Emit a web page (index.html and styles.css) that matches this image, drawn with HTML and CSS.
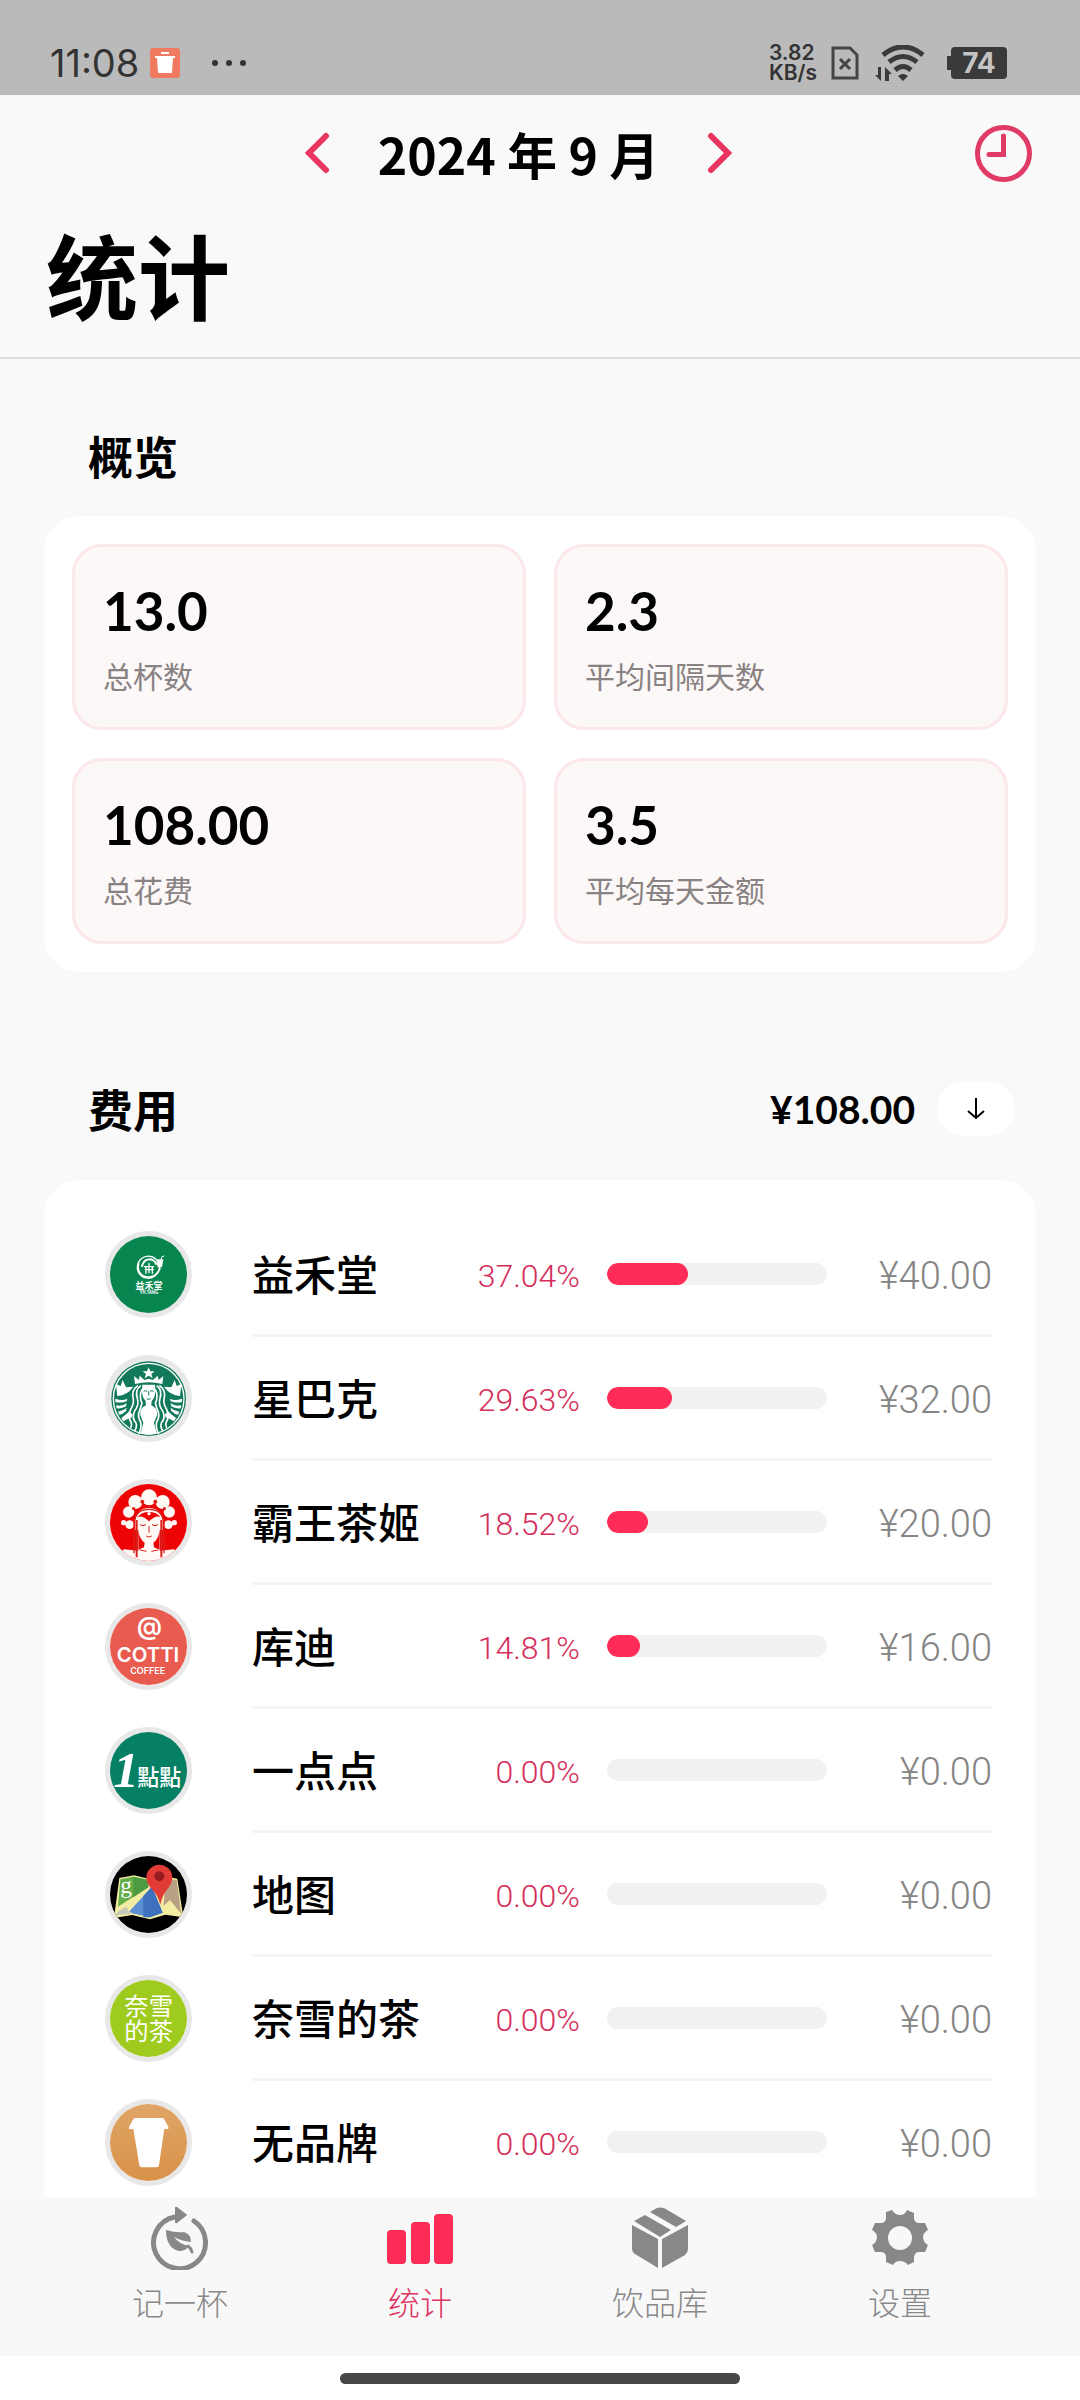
FILE: index.html
```
<!DOCTYPE html>
<html lang="zh-CN">
<head>
    <meta charset="UTF-8">
    <meta name="viewport" content="width=device-width, initial-scale=1.0">
    <title>统计</title>
    <link rel="stylesheet" href="styles.css">
</head>
<body>
    <div class="status-bar">
        <div class="status-left">
            <span class="status-time">11:08</span>
            <svg class="status-app" viewBox="0 0 30 30">
                <rect width="30" height="30" rx="3" fill="#f07a60"/>
                <path d="M11 4h8v2h-8zM5 8h20v2h-2l-1 14q0 1-1 1H9q-1 0-1-1L7 10H5z" fill="#fff"/>
            </svg>
            <svg class="status-dots" viewBox="0 0 36 8" fill="#333">
                <circle cx="4" cy="4" r="3"/><circle cx="18" cy="4" r="3"/><circle cx="32" cy="4" r="3"/>
            </svg>
        </div>
        <div class="status-right">
            <div class="net-speed">3.82<br>KB/s</div>
            <svg class="icon-sim" viewBox="0 0 28 34" fill="none" stroke="#444" stroke-width="3">
                <path d="M2 2H19L26 9V32H2z"/><path d="M9 13l10 10M19 13L9 23"/>
            </svg>
            <svg class="icon-wifi" viewBox="0 0 50 36">
                <g fill="none" stroke="#3a3a3a" stroke-width="5">
                    <path d="M8 10Q28-6 48 10"/><path d="M14 17Q28 6 42 17"/><path d="M20 25Q28 18 36 25"/>
                </g>
                <path d="M23 31Q28 27 33 31L28 36zM3 22h3v14L0 30h3zM10 36V22l7 7h-3v7z" fill="#3a3a3a"/>
            </svg>
            <div class="battery">74</div>
        </div>
    </div>

    <header class="header">
        <div class="header-top">
            <div class="month-picker">
                <button class="icon-btn" type="button" aria-label="上个月">
                    <svg class="chevron" viewBox="0 0 26 42"><path d="M22 4L5 21L22 38"/></svg>
                </button>
                <span class="month">2024 年 9 月</span>
                <button class="icon-btn" type="button" aria-label="下个月">
                    <svg class="chevron" viewBox="0 0 26 42"><path d="M4 4L21 21L4 38"/></svg>
                </button>
            </div>
            <button class="icon-btn" type="button" aria-label="历史记录">
                <svg class="clock" viewBox="0 0 57 57"><circle cx="28.500" cy="28.500" r="26"/><path d="M28.500 11V29.500H14"/></svg>
            </button>
        </div>
        <h1 class="page-title">统计</h1>
    </header>

    <main class="main-content">
        <section class="section">
            <div class="section-head">
                <h2 class="section-title">概览</h2>
            </div>
            <div class="card stats">
                <div class="stat"><div class="stat-value">13.0</div><div class="stat-label">总杯数</div></div>
                <div class="stat"><div class="stat-value">2.3</div><div class="stat-label">平均间隔天数</div></div>
                <div class="stat"><div class="stat-value">108.00</div><div class="stat-label">总花费</div></div>
                <div class="stat"><div class="stat-value">3.5</div><div class="stat-label">平均每天金额</div></div>
            </div>
        </section>

        <section class="section section-cost">
            <div class="section-head">
                <h2 class="section-title">费用</h2>
                <span class="total">¥108.00</span>
                <button class="sort-btn" type="button" aria-label="排序">
                    <svg viewBox="0 0 20 24"><path d="M10 1V21M2 14L10 21L18 14"/></svg>
                </button>
            </div>
            <ul class="card brands">
                <li class="brand">
                    <svg class="logo" viewBox="0 0 231 231">
                        <rect width="231" height="231" fill="#07854f"/>
                        <g fill="none" stroke="#fff" stroke-linecap="round">
                            <path d="M138 70A33 33 0 1 0 148 93" stroke-width="4"/>
                            <path d="M86 82q-6 28 14 38q34 12 50-22" stroke-width="5"/>
                            <path d="M152 74l4-12l6-2" stroke-width="3"/>
                            <path d="M103 92h28M106 101h24M108 92v20M127 92v20M117 82v28" stroke-width="4"/>
                            <path d="M96 90q6-20 24-20q14 2 18 14" stroke-width="6"/>
                        </g>
                        <path d="M138 70h22l-4 24h-13z" fill="#fff"/>
                        <text class="logo-text" font-weight="700"><tspan x="117" y="159" font-size="27">益禾堂</tspan><tspan x="117" y="174" font-size="13">YH.TANG</tspan></text>
                    </svg>
                    <div class="brand-body">
                        <span class="name">益禾堂</span><span class="percent">37.04%</span>
                        <div class="bar"><div class="bar-fill" style="width: 37.04%"></div></div>
                        <span class="amount">¥40.00</span>
                    </div>
                </li>
                <li class="brand">
                    <svg class="logo" viewBox="0 0 231 231">
                        <rect width="231" height="231" fill="#e8e8e8"/>
                        <circle cx="116" cy="116" r="112" fill="#127a5b"/>
                        <circle cx="116" cy="116" r="106" fill="none" stroke="#fff" stroke-width="4"/>
                        <path d="M18 72l4 36q30-2 48-28l-22 2l-10-22l-6 18zM16 116q22 8 36 0l-2 8q-16 6-34 2zM18 136q20 4 32-6l-2 9q-12 8-28 6zM24 155q16-2 26-12l-2 10q-10 10-20 11zM34 174q12-8 24-20l10 10q-2 12-14 12l-14 8z" fill="#fff"/>
                        <path d="M214 72l-4 36q-30-2-48-28l22 2l10-22l6 18zM216 116q-22 8-36 0l2 8q16 6 34 2zM214 136q-20 4-32-6l2 9q12 8 28 6zM208 155q-16-2-26-12l2 10q10 10 20 11zM198 174q-12-8-24-20l-10 10q2 12 14 12l14 8z" fill="#fff"/>
                        <path d="M116 22l5 12h13l-10 8l4 13l-12-8l-12 8l4-13l-10-8h13zM72 48l14 12l3-13l14 13l13-4l13 4l14-13l3 13l14-12l-3 24q-41-10-82 0z" fill="#fff"/>
                        <path d="M97 74h38q5 34-10 50l-1 12q20 8 17 30l-9 22l8 32q-24 8-48 0l8-32l-9-22q-3-22 17-30l-1-12q-15-16-10-50z" fill="#fff"/>
                        <g fill="none" stroke="#fff" stroke-width="5">
                            <path d="M92 77q-18 14-10 38q6 20-8 38q-10 20 4 36q4 10-4 24"/>
                            <path d="M84 76q-22 16-14 42q2 14-8 30q-10 22 2 40q2 8-2 16"/>
                            <path d="M96 88q-10 20 0 42q-6 20-10 30q-2 14 6 26q4 18-6 36"/>
                            <path d="M140 77q18 14 10 38q-6 20 8 38q10 20-4 36q-4 10 4 24"/>
                            <path d="M148 76q22 16 14 42q-2 14 8 30q10 22-2 40q-2 8 2 16"/>
                            <path d="M136 88q10 20 0 42q6 20 10 30q2 14-6 26q-4 18 6 36"/>
                        </g>
                        <path d="M101 94q6-4 11 0M120 94q6-4 11 0M116 94v12M110 116q6 4 12 0" fill="none" stroke="#127a5b" stroke-width="3"/>
                    </svg>
                    <div class="brand-body">
                        <span class="name">星巴克</span><span class="percent">29.63%</span>
                        <div class="bar"><div class="bar-fill" style="width: 29.63%"></div></div>
                        <span class="amount">¥32.00</span>
                    </div>
                </li>
                <li class="brand">
                    <svg class="logo" viewBox="0 0 231 231">
                        <rect width="231" height="231" fill="#ee0304"/>
                        <g fill="#fffaf5">
                            <circle cx="117" cy="40" r="24"/><circle cx="76" cy="54" r="21"/><circle cx="158" cy="54" r="21"/>
                            <circle cx="56" cy="84" r="17"/><circle cx="178" cy="84" r="17"/><circle cx="59" cy="122" r="13"/>
                            <circle cx="175" cy="122" r="13"/><circle cx="41" cy="116" r="8"/><circle cx="193" cy="116" r="8"/>
                            <path d="M76 138V110Q82 72 117 72Q152 72 158 110V138z"/>
                            <path d="M85 200V104Q117 76 149 104V200L192 196L231 231H0L42 196z"/>
                        </g>
                        <path d="M82 100Q94 84 117 84Q140 84 152 100Q138 92 117 112Q96 92 82 100z" fill="#ee0304"/>
                        <path d="M85 142Q90 168 104 176L102 190L86 197zM149 142Q144 168 130 176L132 190L148 197z" fill="#ee0304"/>
                        <g fill="none" stroke="#d9211d" stroke-width="4">
                            <path d="M72 208V112Q80 76 117 76Q154 76 162 112V208"/>
                            <path d="M80 220V108M154 220V108" stroke-width="6"/>
                            <path d="M90 122q9 6 18 0M126 122q9 6 18 0M117 126v20M109 156q8 6 16 0M90 198l20 4M144 198l-20 4" stroke-width="3"/>
                        </g>
                        <g fill="#d9211d"><circle cx="97" cy="53" r="6"/><circle cx="136" cy="53" r="6"/><circle cx="71" cy="74" r="5"/><circle cx="163" cy="74" r="5"/><circle cx="117" cy="68" r="4"/></g>
                        <circle cx="117" cy="89" r="5" fill="#fff"/>
                    </svg>
                    <div class="brand-body">
                        <span class="name">霸王茶姬</span><span class="percent">18.52%</span>
                        <div class="bar"><div class="bar-fill" style="width: 18.52%"></div></div>
                        <span class="amount">¥20.00</span>
                    </div>
                </li>
                <li class="brand">
                    <svg class="logo" viewBox="0 0 231 231">
                        <rect width="231" height="231" fill="#e85b4e"/>
                        <text x="118" y="82" class="logo-text logo-latin" font-size="76" font-weight="600">@</text>
                        <text x="114" y="162" class="logo-text logo-latin" font-size="61" font-weight="600">COTTI</text>
                        <text x="113" y="197" class="logo-text logo-latin" font-size="27" font-weight="600">COFFEE</text>
                    </svg>
                    <div class="brand-body">
                        <span class="name">库迪</span><span class="percent">14.81%</span>
                        <div class="bar"><div class="bar-fill" style="width: 14.81%"></div></div>
                        <span class="amount">¥16.00</span>
                    </div>
                </li>
                <li class="brand">
                    <svg class="logo" viewBox="0 0 231 231">
                        <rect width="231" height="231" fill="#068064"/>
                        <text x="48" y="165" class="logo-text logo-serif" font-size="154" font-weight="700" font-style="italic">1</text>
                        <text x="148" y="160" class="logo-text" font-size="66" font-weight="500">點點</text>
                    </svg>
                    <div class="brand-body">
                        <span class="name">一点点</span><span class="percent">0.00%</span>
                        <div class="bar"><div class="bar-fill" style="width: 0%"></div></div>
                        <span class="amount">¥0.00</span>
                    </div>
                </li>
                <li class="brand">
                    <svg class="logo" viewBox="0 0 231 231">
                        <rect width="231" height="231"/>
                        <path d="M28 66L72 58L115 68L160 60L202 68L220 184L166 176L120 190L66 177L12 186z" fill="#f3eca3"/>
                        <path d="M31 70L70 62L115 72V94L24 152z" fill="#65ad48"/>
                        <path d="M70 62L115 72V94L70 124z" fill="#4d9a41"/>
                        <path d="M17 178L22 168L48 152L62 174z" fill="#c7c8b8"/>
                        <path d="M58 166L126 92L158 170L120 184L66 172z" fill="#5b8fd3"/>
                        <path d="M100 120L126 92L158 170L120 184H100z" fill="#3e71bd"/>
                        <path d="M168 68L200 72L214 174L180 132L160 150z" fill="#b9a183"/>
                        <text x="48" y="112" class="logo-text logo-serif" font-size="70">g</text>
                        <path d="M148 26A39 39 0 0 1 187 65Q186 84 170 102Q156 120 151 146Q145 120 128 102Q110 84 109 65A39 39 0 0 1 148 26z" fill="#e23b35"/>
                        <circle cx="148" cy="61" r="15" fill="#951c20"/>
                    </svg>
                    <div class="brand-body">
                        <span class="name">地图</span><span class="percent">0.00%</span>
                        <div class="bar"><div class="bar-fill" style="width: 0%"></div></div>
                        <span class="amount">¥0.00</span>
                    </div>
                </li>
                <li class="brand">
                    <svg class="logo" viewBox="0 0 231 231">
                        <rect width="231" height="231" fill="#9fcb1e"/>
                        <text class="logo-text" font-size="73"><tspan x="116" y="106">奈雪</tspan><tspan x="116" y="179">的茶</tspan></text>
                    </svg>
                    <div class="brand-body">
                        <span class="name">奈雪的茶</span><span class="percent">0.00%</span>
                        <div class="bar"><div class="bar-fill" style="width: 0%"></div></div>
                        <span class="amount">¥0.00</span>
                    </div>
                </li>
                <li class="brand">
                    <svg class="logo" viewBox="0 0 231 231">
                        <defs>
                            <linearGradient id="cupBg" x1="0" y1="0" x2="0" y2="1">
                                <stop offset="0" stop-color="#e0a566"/><stop offset="1" stop-color="#d8924a"/>
                            </linearGradient>
                        </defs>
                        <rect width="231" height="231" fill="url(#cupBg)"/>
                        <path d="M76 42H156Q162 42 164 48L175 68V75H163L147 184Q146 190 140 190H95Q89 190 88 184L70 75H57V68L69 47Q71 42 76 42z" fill="#fff"/>
                    </svg>
                    <div class="brand-body">
                        <span class="name">无品牌</span><span class="percent">0.00%</span>
                        <div class="bar"><div class="bar-fill" style="width: 0%"></div></div>
                        <span class="amount">¥0.00</span>
                    </div>
                </li>
            </ul>
        </section>
    </main>

    <nav class="tab-bar">
        <a class="tab" href="#record">
            <svg class="tab-icon" viewBox="0 0 64 64">
                <path d="M46 15A26 26 0 1 1 27 11" fill="none" stroke="currentColor" stroke-width="5" stroke-linecap="round"/>
                <path d="M27 2Q27 0 29 1L38 8Q40 9 38 10L29 17Q27 18 27 16z" fill="currentColor"/>
                <path d="M18 24Q28 27 36 26Q43 28 43 36Q33 35 26 31Q31 38 41 40Q38 45 31 45Q18 42 18 24z" fill="currentColor"/>
                <path d="M40 40Q43 42 44 46" fill="none" stroke="currentColor" stroke-width="3" stroke-linecap="round"/>
            </svg>
            <span>记一杯</span>
        </a>
        <a class="tab active" href="#stats" aria-current="page">
            <svg class="tab-icon tab-icon-wide" viewBox="0 0 68 64" fill="#fe2c56">
                <rect x="1" y="24" width="19" height="34" rx="4"/><rect x="25" y="16" width="19" height="42" rx="4"/><rect x="48" y="8" width="19" height="50" rx="4"/>
            </svg>
            <span>统计</span>
        </a>
        <a class="tab" href="#library">
            <svg class="tab-icon" viewBox="0 0 64 64" fill="currentColor">
                <path d="M6 15L17 9L43 24L32 31zM22 6L29 2Q32 1 36 2L58 15L48 21zM4 19L30 33V62L7 48Q4 46 4 43zM34 33L60 19V43Q60 46 57 49L34 62z"/>
            </svg>
            <span>饮品库</span>
        </a>
        <a class="tab" href="#settings">
            <svg class="tab-icon" viewBox="0 0 64 64" fill="currentColor">
                <path fill-rule="evenodd" d="M18 6L24 4Q27 9 32 9Q37 9 39 4L46 7V13Q47 17 51 17H57L60 24Q55 27 55 31Q55 36 60 39L57 46H51Q47 46 46 51V56L40 59Q37 55 32 55Q27 55 25 59L18 56V50Q17 46 13 46H7L4 39Q9 36 9 31Q9 27 4 24L7 17H13Q17 17 18 13zM32 20A12 12 0 1 0 32 44A12 12 0 1 0 32 20z"/>
            </svg>
            <span>设置</span>
        </a>
    </nav>
    <div class="home-area"><div class="home-indicator"></div></div>
</body>
</html>
```
FILE: styles.css
```
* {
    margin: 0;
    padding: 0;
    box-sizing: border-box;
}

body {
    font-family: "Noto Sans CJK SC", sans-serif;
    background: #f9f9f9;
    color: #000;
    height: 100vh;
    display: flex;
    flex-direction: column;
    overflow: hidden;
}

button {
    border: none;
    background: none;
    cursor: pointer;
}

svg {
    display: block;
    flex-shrink: 0;
}

/* Status bar */
.status-bar {
    height: 95px;
    flex-shrink: 0;
    padding: 32px 73px 0 50px;
    background: #bababa;
    color: #333;
    display: flex;
    justify-content: space-between;
}

.status-left,
.status-right {
    height: 62px;
    display: flex;
    align-items: center;
}

.status-time {
    font-family: Inter, sans-serif;
    font-size: 38px;
    line-height: 62px;
}

.status-app {
    width: 30px;
    margin-left: 11px;
}

.status-dots {
    width: 36px;
    margin-left: 31px;
}

.net-speed {
    font-family: Inter, sans-serif;
    font-size: 21px;
    font-weight: 600;
    line-height: 20px;
}

.icon-sim {
    width: 28px;
    margin-left: 14px;
}

.icon-wifi {
    width: 50px;
    margin: 0 26px 0 16px;
}

.battery {
    width: 56px;
    height: 32px;
    border-radius: 4px;
    background: #3a3a3a;
    color: #c4c4c4;
    font-family: Inter, sans-serif;
    font-size: 28px;
    font-weight: 700;
    line-height: 32px;
    text-align: center;
    position: relative;
}

.battery::before {
    content: "";
    position: absolute;
    left: -4px;
    top: 9px;
    width: 4px;
    height: 14px;
    background: #3a3a3a;
}

/* Header */
.header {
    flex-shrink: 0;
    padding: 18px 48px 12px 46px;
    border-bottom: 2px solid #dcdcdc;
}

.header-top {
    display: flex;
    align-items: center;
    padding-left: 16px;
}

.month-picker {
    flex: 1;
    display: flex;
    justify-content: center;
    align-items: center;
    gap: 48px;
}

.month {
    font-size: 50px;
    font-weight: 700;
    line-height: 80px;
}

.chevron {
    width: 26px;
    fill: none;
    stroke: #ea355f;
    stroke-width: 6;
    stroke-linecap: round;
}

.clock {
    width: 57px;
    fill: none;
    stroke: #e03a66;
    stroke-width: 5;
    stroke-linecap: round;
}

.page-title {
    margin-top: 8px;
    font-size: 92px;
    font-weight: 700;
    line-height: 144px;
}

/* Content */
.main-content {
    flex: 1;
    min-height: 0;
    overflow: hidden;
    padding: 64px 44px 0;
}

.section-cost {
    margin-top: 104px;
}

.section-head {
    display: flex;
    align-items: center;
    height: 66px;
    padding: 0 21px 0 44px;
}

.section-title {
    flex: 1;
    font-size: 45px;
    font-weight: 700;
    line-height: 66px;
}

.total {
    font-family: Lato, sans-serif;
    font-size: 39px;
    font-weight: 700;
}

.sort-btn {
    width: 78px;
    height: 54px;
    margin-left: 22px;
    border-radius: 27px;
    background: #fff;
    display: flex;
    align-items: center;
    justify-content: center;
}

.sort-btn svg {
    width: 20px;
    fill: none;
    stroke: #000;
    stroke-width: 2;
}

.card {
    background: #fff;
    border-radius: 36px;
}

.stats {
    margin-top: 27px;
    padding: 28px;
    display: grid;
    grid-template-columns: 1fr 1fr;
    gap: 28px;
}

.stat {
    padding: 26px 28px;
    border: 3px solid #fce7eb;
    border-radius: 30px;
    background: #fdf8f8;
}

.stat-value {
    font-family: Lato, sans-serif;
    font-size: 53px;
    font-weight: 700;
    line-height: 76px;
}

.stat-label {
    font-size: 30px;
    line-height: 52px;
    color: #888283;
}

/* Brand list */
.brands {
    margin-top: 38px;
    padding: 33px 44px 33px 61px;
    list-style: none;
}

.brand {
    display: flex;
    align-items: center;
    gap: 60px;
}

.logo {
    width: 87px;
    height: 87px;
    margin-bottom: 2px;
    border: 5px solid #e8e8e8;
    border-radius: 50%;
}

.logo-text {
    fill: #fff;
    text-anchor: middle;
}

.logo-latin {
    font-family: Inter, sans-serif;
}

.logo-serif {
    font-family: "Liberation Serif", serif;
}

.brand-body {
    flex: 1;
    height: 124px;
    border-bottom: 3px solid #f4f4f4;
    display: grid;
    grid-template-columns: 189px 112px 1fr 138px;
    column-gap: 27px;
    align-items: center;
    white-space: nowrap;
}

.name {
    padding-bottom: 2px;
    font-size: 42px;
    font-weight: 500;
    line-height: 62px;
}

.percent,
.amount {
    padding-top: 4px;
    font-family: Roboto, sans-serif;
    font-weight: 300;
    text-align: right;
}

.percent {
    font-size: 32px;
    color: #d42e5b;
}

.amount {
    font-size: 38px;
    color: #858585;
}

.bar {
    height: 22px;
    border-radius: 11px;
    background: #f1f1f1;
    overflow: hidden;
}

.bar-fill {
    height: 100%;
    border-radius: 11px;
    background: #fe2c56;
}

/* Bottom tabs */
.tab-bar {
    height: 158px;
    flex-shrink: 0;
    padding: 8px 60px 0;
    background: #f8f8f8;
    display: flex;
}

.tab {
    flex: 1;
    display: flex;
    flex-direction: column;
    align-items: center;
    gap: 8px;
    color: #88888a;
    font-size: 32px;
    font-weight: 300;
    line-height: 46px;
    text-decoration: none;
}

.tab.active {
    color: #dc3361;
}

.tab-icon {
    width: 64px;
    height: 64px;
}

.tab-icon-wide {
    width: 68px;
}

.home-area {
    height: 44px;
    flex-shrink: 0;
    padding-top: 17px;
    background: #fff;
}

.home-indicator {
    width: 37%;
    height: 11px;
    margin: 0 auto;
    border-radius: 6px;
    background: #474747;
}
```
